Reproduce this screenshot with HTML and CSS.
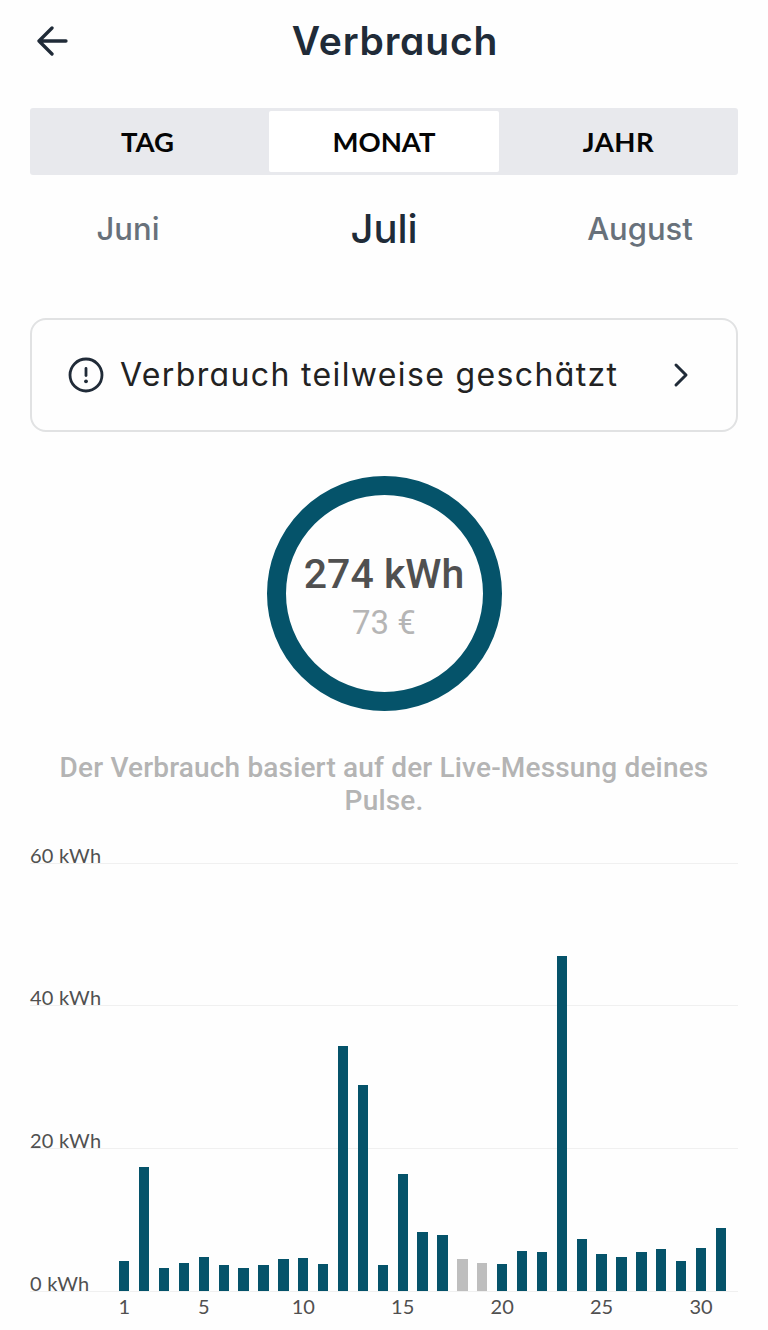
FILE: index.html
```html
<!DOCTYPE html>
<html lang="de">
<head>
<meta charset="utf-8">
<title>Verbrauch</title>
<link rel="stylesheet" href="styles.css">
</head>
<body>
<main class="screen">
  <header class="header">
    <svg class="back" viewBox="0 0 32 32"><path d="M15 3 2 16l13 13M2 16h27"/></svg>
    <h1 class="title">Verbrauch</h1>
  </header>
  <nav class="tabs">
    <span class="tab tab-day">TAG</span>
    <span class="tab tab-active">MONAT</span>
    <span class="tab tab-year">JAHR</span>
  </nav>
  <div class="months">
    <span class="month prev">Juni</span>
    <span class="month current">Juli</span>
    <span class="month next">August</span>
  </div>
  <section class="notice">
    <svg class="info" viewBox="0 0 36 36"><circle cx="18" cy="18" r="16"/><path d="M18 11.5v7"/><circle class="dot" cx="18" cy="24.3" r="1.9"/></svg>
    <span class="notice-text">Verbrauch teilweise geschätzt</span>
    <svg class="chevron" viewBox="0 0 16 26"><path d="m3 3 10 10L3 23"/></svg>
  </section>
  <section class="ring">
    <strong class="energy">274 kWh</strong>
    <span class="cost">73 €</span>
  </section>
  <p class="source">Der Verbrauch basiert auf der Live-Messung deines Pulse.</p>
  <section class="chart">
    <div class="grid-row"><span class="unit">60 kWh</span></div>
    <div class="grid-row"><span class="unit">40 kWh</span></div>
    <div class="grid-row"><span class="unit">20 kWh</span></div>
    <div class="grid-row"><span class="unit">0 kWh</span></div>
    <div class="bars" id="bars"></div>
  </section>
  <div class="days" id="days"></div>
</main>
<script src="chart.js"></script>
</body>
</html>
```
FILE: styles.css
```css
* { box-sizing: border-box; }
body { margin: 0; background: #fefefe; }
.screen { width: 768px; height: 1330px; padding: 0 30px; overflow: hidden; font-family: Roboto, sans-serif; }
.header { display: grid; grid-template-columns: 40px 1fr 40px; align-items: center; height: 108px; padding-bottom: 26px; }
.back { width: 32px; height: 32px; margin-left: 7px; fill: none; stroke: #202b38; stroke-width: 3.3; stroke-linecap: round; stroke-linejoin: round; }
.title { margin: 0; padding-left: 22px; text-align: center; font: 600 39px/48px Inter, sans-serif; font-feature-settings: "cv11"; letter-spacing: .8px; color: #202b38; }
.tabs { display: grid; grid-template-columns: 1fr 230px 1fr; height: 67px; padding: 3px 0; border-radius: 3px; background: #e8e9ed; }
.tab { display: flex; align-items: center; justify-content: center; font: 700 27.5px/32px Lato, sans-serif; color: #050505; }
.tab-day { padding-right: 4px; }
.tab-year { letter-spacing: .5px; }
.tab-active { background: #fff; border-radius: 2px; }
.months { display: grid; grid-template-columns: 196px 1fr 196px; align-items: center; height: 107px; text-align: center; font-family: Inter, sans-serif; }
.month { font-size: 31px; font-weight: 500; color: #68717b; }
.current { font-size: 40px; color: #202b38; }
.notice { display: flex; align-items: center; height: 114px; margin-top: 36px; padding: 0 47px 0 36px; border: 2px solid #e1e2e3; border-radius: 16px; }
.info { width: 36px; height: 36px; fill: none; stroke: #202b38; stroke-width: 2.8; stroke-linecap: round; }
.dot { fill: #202b38; stroke: none; }
.notice-text { flex: 1; padding-left: 16px; white-space: nowrap; font: 400 32px/40px Inter, sans-serif; font-feature-settings: "cv11"; letter-spacing: 1.36px; color: #222; }
.chevron { width: 16px; height: 26px; fill: none; stroke: #202b38; stroke-width: 3; stroke-linecap: round; stroke-linejoin: round; }
.ring { display: flex; flex-direction: column; align-items: center; width: 235px; height: 235px; margin: 44px auto 0; padding-top: 54px; border: 19px solid #05536a; border-radius: 50%; }
.energy { font-size: 41px; line-height: 50px; font-weight: 500; color: #505050; white-space: nowrap; }
.cost { font-size: 33px; line-height: 40px; margin-top: 4px; color: #b5b5b5; }
.source { margin: 40px 0 0; height: 77.5px; text-align: center; font-size: 28px; line-height: 33px; font-weight: 500; letter-spacing: .17px; color: #b4b4b4; }
.chart { display: grid; grid-template-rows: 35px repeat(3, 142.75px); position: relative; height: 463.3px; }
.grid-row { display: flex; align-items: flex-end; border-bottom: 1.5px solid #f0f0f0; }
.unit { height: 18px; font: 400 20px/20px Lato, sans-serif; letter-spacing: .25px; color: #505050; }
.bars { position: absolute; left: 84.3px; bottom: .5px; display: grid; grid-template-columns: repeat(31, 19.9px); align-items: end; justify-items: center; height: 428px; }
.bar { width: 10.3px; background: #05536a; }
.bar.estimated { background: #bebebe; }
.days { display: grid; grid-template-columns: repeat(31, 19.9px); margin-left: 84.3px; padding-top: 3px; font: 400 20px/22px Lato, sans-serif; color: #505050; }
.day { display: flex; justify-content: center; white-space: nowrap; }
```
FILE: chart.js
```js
const heights = [30, 124, 23.3, 28.7, 34, 26, 23.3, 26.3, 32.7, 33.3, 27.3, 245.5, 206.5, 26, 117.3, 59, 56, 32, 28.5, 27, 40, 39, 335.6, 52.5, 37.7, 34.3, 39.3, 42.3, 30.3, 43.5, 63.7];
const estimated = [18, 19];
const bars = document.getElementById('bars');
const days = document.getElementById('days');
heights.forEach((height, index) => {
  const day = index + 1;
  const bar = document.createElement('div');
  bar.className = estimated.includes(day) ? 'bar estimated' : 'bar';
  bar.style.height = height + 'px';
  bars.append(bar);
  const label = document.createElement('span');
  label.className = 'day';
  label.textContent = day === 1 || day % 5 === 0 ? day : '';
  days.append(label);
});
```
